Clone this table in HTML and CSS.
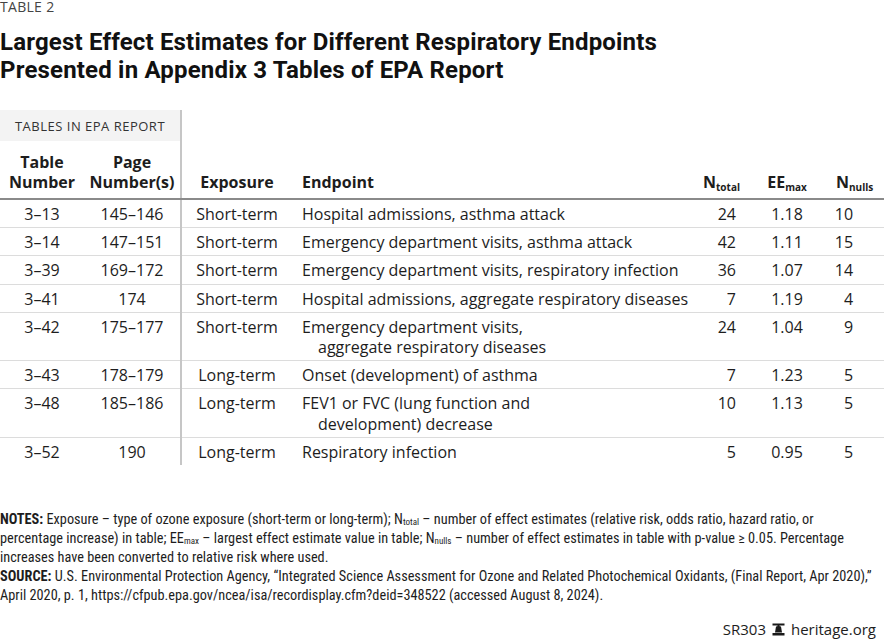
FILE: index.html
```html
<!DOCTYPE html>
<html>
<head>
<meta charset="utf-8">
<link rel="stylesheet" href="styles.css">
</head>
<body>
<div class="page">
  <div class="kicker">TABLE 2</div>
  <h1 class="title">Largest Effect Estimates for Different Respiratory Endpoints<br>Presented in Appendix 3 Tables of EPA Report</h1>
  <table class="data">
    <colgroup>
      <col class="c1"><col class="c2"><col class="c3"><col class="c4"><col class="c5"><col class="c6"><col class="c7">
    </colgroup>
    <thead>
      <tr class="group">
        <th colspan="2" class="grp sep"><span>TABLES IN EPA REPORT</span></th>
        <th colspan="5"></th>
      </tr>
      <tr class="head">
        <th class="ctr">Table<br>Number</th>
        <th class="ctr sep">Page<br>Number(s)</th>
        <th class="ctr">Exposure</th>
        <th class="left">Endpoint</th>
        <th class="right">N<sub>total</sub></th>
        <th class="ctr">EE<sub>max</sub></th>
        <th class="nul">N<sub>nulls</sub></th>
      </tr>
    </thead>
    <tbody>
      <tr><td class="ctr">3–13</td><td class="ctr sep">145–146</td><td class="ctr">Short-term</td><td class="ep">Hospital admissions, asthma attack</td><td class="num">24</td><td class="ctr">1.18</td><td class="nn">10</td></tr>
      <tr><td class="ctr">3–14</td><td class="ctr sep">147–151</td><td class="ctr">Short-term</td><td class="ep">Emergency department visits, asthma attack</td><td class="num">42</td><td class="ctr">1.11</td><td class="nn">15</td></tr>
      <tr><td class="ctr">3–39</td><td class="ctr sep">169–172</td><td class="ctr">Short-term</td><td class="ep">Emergency department visits, respiratory infection</td><td class="num">36</td><td class="ctr">1.07</td><td class="nn">14</td></tr>
      <tr><td class="ctr">3–41</td><td class="ctr sep">174</td><td class="ctr">Short-term</td><td class="ep">Hospital admissions, aggregate respiratory diseases</td><td class="num">7</td><td class="ctr">1.19</td><td class="nn">4</td></tr>
      <tr><td class="ctr">3–42</td><td class="ctr sep">175–177</td><td class="ctr">Short-term</td><td class="ep">Emergency department visits,<br>aggregate respiratory diseases</td><td class="num">24</td><td class="ctr">1.04</td><td class="nn">9</td></tr>
      <tr><td class="ctr">3–43</td><td class="ctr sep">178–179</td><td class="ctr">Long-term</td><td class="ep">Onset (development) of asthma</td><td class="num">7</td><td class="ctr">1.23</td><td class="nn">5</td></tr>
      <tr><td class="ctr">3–48</td><td class="ctr sep">185–186</td><td class="ctr">Long-term</td><td class="ep">FEV1 or FVC (lung function and<br>development) decrease</td><td class="num">10</td><td class="ctr">1.13</td><td class="nn">5</td></tr>
      <tr class="last"><td class="ctr">3–52</td><td class="ctr sep">190</td><td class="ctr">Long-term</td><td class="ep">Respiratory infection</td><td class="num">5</td><td class="ctr">0.95</td><td class="nn">5</td></tr>
    </tbody>
  </table>
  <div class="notes">
    <p><b>NOTES:</b> Exposure – type of ozone exposure (short-term or long-term); N<sub>total</sub> – number of effect estimates (relative risk, odds ratio, hazard ratio, or<br>percentage increase) in table; EE<sub>max</sub> – largest effect estimate value in table; N<sub>nulls</sub> – number of effect estimates in table with p-value ≥ 0.05. Percentage<br>increases have been converted to relative risk where used.</p>
    <p><b>SOURCE:</b> U.S. Environmental Protection Agency, “Integrated Science Assessment for Ozone and Related Photochemical Oxidants, (Final Report, Apr 2020),”<br>April 2020, p. 1, https://cfpub.epa.gov/ncea/isa/recordisplay.cfm?deid=348522 (accessed August 8, 2024).</p>
  </div>
  <div class="footer">
    <span>SR303</span>
    <svg class="bell" width="13" height="13" viewBox="0 0 13 13"><rect x="0.5" y="0.5" width="12" height="2" fill="#1a1a1a"/><rect x="5.5" y="2" width="2" height="2" fill="#1a1a1a"/><path d="M4 3.5 Q6.5 2.5 9 3.5 L10 9.5 L3 9.5 Z" fill="#1a1a1a"/><rect x="0.5" y="10" width="12" height="2.5" fill="#1a1a1a"/></svg>
    <span>heritage.org</span>
  </div>
</div>
</body>
</html>
```
FILE: styles.css
```css
html, body {
  margin: 0;
  padding: 0;
  background: #fff;
}
body {
  color: #1d1d1d;
  font-family: "Open Sans", "Liberation Sans", sans-serif;
}
.page {
  width: 884px;
  height: 643px;
  position: relative;
  overflow: hidden;
}
.kicker {
  font-size: 14px;
  line-height: 14px;
  margin-top: 0;
  color: #444;
  letter-spacing: 0.3px;
}
.title {
  margin: 14px 0 0 0;
  font-family: "Roboto", "Open Sans", sans-serif;
  font-weight: 700;
  font-size: 24px;
  line-height: 28px;
  letter-spacing: 0.18px;
  color: #111;
}
.data {
  margin-top: 26px;
  width: 884px;
  border-collapse: collapse;
  table-layout: fixed;
  font-size: 16px;
}
.c1 { width: 84px; }
.c2 { width: 97px; }
.c3 { width: 111px; }
.c4 { width: 408px; }
.c5 { width: 44px; }
.c6 { width: 86px; }
.c7 { width: 54px; }
.data th, .data td {
  padding: 0;
}
.sep {
  border-right: 2px solid #c6c6c6;
}
.group th {
  height: 31px;
  vertical-align: middle;
}
.grp {
  background: #f3f3f3;
  font-weight: 400;
  font-size: 13px;
  color: #333;
  text-align: center;
  letter-spacing: 0.5px;
}
.head th {
  height: 51px;
  vertical-align: bottom;
  padding-bottom: 6px;
  font-weight: 700;
  line-height: 20px;
  border-bottom: 2px solid #8a8a8a;
}
.head .left { text-align: left; padding-left: 10px; }
.head .right { text-align: right; padding-right: 4px; }
.head .nul { text-align: left; padding-left: 6px; }
.ctr { text-align: center; }
sub {
  font-size: 10px;
  vertical-align: -3px;
  line-height: 0;
}
.head sub { font-weight: 700; }
.data tbody td {
  height: 28px;
  line-height: 20.2px;
  padding-top: 4px;
  padding-bottom: 3px;
  vertical-align: top;
  border-bottom: 1px solid #dcdcdc;
  box-sizing: border-box;
}
.data tbody tr.last td { border-bottom: none; }
.data tbody td.ep {
  padding-left: 26px;
  text-indent: -16px;
}
.data tbody td.num {
  text-align: right;
  padding-right: 8px;
}
.data tbody td.nn {
  text-align: right;
  padding-right: 31px;
}
.notes {
  margin-top: 45px;
  font-family: "Liberation Sans Narrow", "Roboto Condensed", "Liberation Sans", sans-serif;
  font-size: 14.3px;
  line-height: 19px;
  color: #1d1d1d;
  white-space: nowrap;
}
.notes p { margin: 0; }
.notes b { font-weight: 700; }
.notes sub {
  font-size: 9px;
  vertical-align: -1px;
}
.footer {
  position: absolute;
  right: 8px;
  bottom: 4px;
  display: flex;
  align-items: center;
  gap: 6px;
  font-size: 15px;
  color: #1d1d1d;
}
.bell { display: block; }
```
